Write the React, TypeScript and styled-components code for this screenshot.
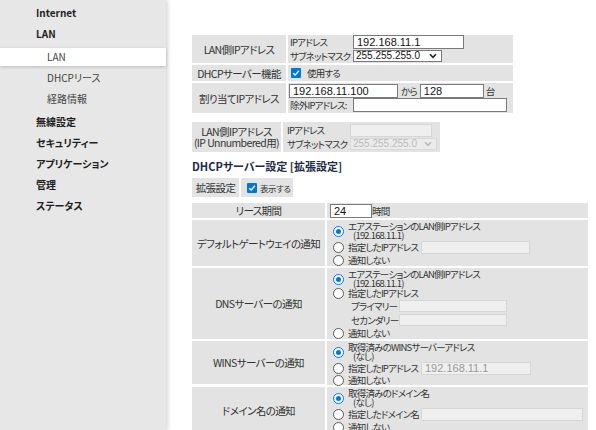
import React from 'react';
import styled, { createGlobalStyle, css } from 'styled-components';

const GlobalStyle = createGlobalStyle`
  html, body { margin: 0; padding: 0; background: #fff; }
  body {
    font-family: "Noto Sans CJK JP", "Noto Sans", sans-serif;
    font-size: 11px;
    color: #333;
    font-feature-settings: "palt";
  }
  * { box-sizing: border-box; }
`;

const Page = styled.div`
  display: flex;
  width: 596px;
  height: 430px;
  overflow: hidden;
`;

/* ---------- side menu ---------- */

const Sidebar = styled.nav`
  width: 166px;
  flex-shrink: 0;
  background: #e7e7e7;
  box-shadow: 2px 0 4px rgba(0, 0, 0, 0.16);
  padding-top: 2px;
  position: relative;
  z-index: 1;
`;

const MenuItem = styled.div`
  height: 21px;
  line-height: 21px;
  padding-left: 36px;
  font-weight: bold;
  font-size: 10px;
  color: #1e1e1e;
`;

const SubMenu = styled.div`
  padding-top: 1px;
`;

const SubItem = styled.div<{ $active?: boolean }>`
  height: 18px;
  line-height: 18px;
  margin: 3px 0;
  padding-left: 47px;
  font-size: 10px;
  color: #444;
  ${(p) =>
    p.$active &&
    css`
      background: #fff;
      box-shadow: 0 1px 3px rgba(0, 0, 0, 0.2);
    `}
`;

/* ---------- main ---------- */

const Main = styled.main`
  flex: 1;
  padding: 35px 0 0 26px;
  display: flex;
  flex-direction: column;
  align-items: flex-start;
`;

const FormGrid = styled.div<{ $cols: string; $mt?: number }>`
  display: grid;
  grid-template-columns: ${(p) => p.$cols};
  gap: 2px;
  margin-top: ${(p) => p.$mt || 0}px;
`;

const LabelCell = styled.div<{ $h?: number }>`
  background: #e3e3e3;
  display: flex;
  align-items: center;
  justify-content: center;
  text-align: center;
  font-size: 10.5px;
  letter-spacing: -0.6px;
  line-height: 11px;
  white-space: nowrap;
  color: #333;
  height: ${(p) => (p.$h ? `${p.$h}px` : 'auto')};
`;

const ValueCell = styled.div<{ $pl?: number }>`
  background: #e3e3e3;
  padding-left: ${(p) => p.$pl ?? 1}px;
  display: flex;
  flex-direction: column;
  justify-content: center;
  font-size: 9.5px;
  letter-spacing: -0.8px;
`;

const FieldLine = styled.div<{ $label?: number; $h?: number }>`
  display: grid;
  grid-template-columns: ${(p) => (p.$label ? `${p.$label}px auto` : 'auto')};
  align-items: center;
  height: ${(p) => p.$h || 14}px;
  justify-content: start;
`;

const InlineLine = styled.div<{ $h?: number }>`
  display: flex;
  align-items: center;
  height: ${(p) => p.$h || 14}px;
`;

const SmallText = styled.span<{ $pad?: number }>`
  color: #333;
  padding: 0 ${(p) => p.$pad ?? 0}px;
  white-space: nowrap;
`;

const TextInput = styled.input<{ $w: number; $h?: number }>`
  width: ${(p) => p.$w}px;
  height: ${(p) => p.$h || 14}px;
  border: 1px solid #7a7a7a;
  background: #fff;
  font-family: "Liberation Sans", Arial, sans-serif;
  font-size: 11px;
  letter-spacing: 0;
  color: #111;
  padding: 0 3px;
  margin: 0;
  outline: none;
  flex-shrink: 0;
  &:disabled {
    background: #efefef;
    border-color: #d6d6d6;
    color: #999;
  }
`;

const SelectWrap = styled.div<{ $w: number }>`
  position: relative;
  width: ${(p) => p.$w}px;
  height: 12px;
`;

const Select = styled.select`
  appearance: none;
  width: 100%;
  height: 12px;
  border: 1px solid #7a7a7a;
  background: #fff;
  font-family: "Liberation Sans", Arial, sans-serif;
  font-size: 10px;
  line-height: 10px;
  letter-spacing: 0;
  color: #111;
  padding: 0 0 0 2px;
  margin: 0;
  display: block;
  &:disabled {
    background: #efefef;
    border-color: #d6d6d6;
    color: #aaa;
  }
`;

const Chevron = styled.svg<{ $disabled?: boolean }>`
  position: absolute;
  right: 5px;
  top: 3px;
  width: 8px;
  height: 6px;
  color: ${(p) => (p.$disabled ? '#bbb' : '#222')};
  pointer-events: none;
`;

const CheckBox = styled.span<{ $gap?: number }>`
  display: inline-flex;
  align-items: center;
  justify-content: center;
  width: 10px;
  height: 10px;
  background: #0078d7;
  border-radius: 1px;
  flex-shrink: 0;
  margin-right: ${(p) => p.$gap ?? 5}px;
`;

const CheckLine = styled.label<{ $pl?: number; $pr?: number; $size?: number }>`
  display: flex;
  align-items: center;
  padding: 0 ${(p) => p.$pr ?? 0}px 0 ${(p) => p.$pl ?? 4}px;
  height: 100%;
  font-size: ${(p) => p.$size ?? 9.5}px;
  letter-spacing: ${(p) => (p.$size ? '-0.4px' : '-0.8px')};
`;

const Heading = styled.h2`
  margin: 7px 0 0;
  font-size: 11px;
  line-height: 14px;
  font-weight: bold;
  color: #1c2b47;
`;

/* ---------- radio groups ---------- */

const Radio = styled.span<{ $checked?: boolean }>`
  width: 11px;
  height: 11px;
  border-radius: 50%;
  flex-shrink: 0;
  border: 1px solid ${(p) => (p.$checked ? '#0078d7' : '#5a5a5a')};
  background: #fff;
  display: inline-flex;
  align-items: center;
  justify-content: center;
  margin-right: 4px;
  &::after {
    content: '';
    width: 5px;
    height: 5px;
    border-radius: 50%;
    background: ${(p) => (p.$checked ? '#0078d7' : 'transparent')};
  }
`;

const OptionList = styled.div`
  display: flex;
  flex-direction: column;
  padding: 2px 0 0 5px;
`;

const Option = styled.label<{ $h: number }>`
  display: flex;
  align-items: center;
  height: ${(p) => p.$h}px;
  color: #333;
`;

const OptionText = styled.span<{ $w?: number }>`
  line-height: 9px;
  white-space: nowrap;
  width: ${(p) => (p.$w ? `${p.$w}px` : 'auto')};
  flex-shrink: 0;
`;

const SubText = styled.span`
  display: block;
  padding-left: 5px;
`;

const SubField = styled.div<{ $h: number }>`
  display: grid;
  grid-template-columns: 48px auto;
  align-items: center;
  height: ${(p) => p.$h}px;
  padding-left: 18px;
`;

/* ---------- pieces ---------- */

const ChevronIcon = ({ disabled }: { disabled?: boolean }) => (
  <Chevron $disabled={disabled} viewBox="0 0 8 6">
    <path d="M1 1.2 L4 4.4 L7 1.2" fill="none" stroke="currentColor" strokeWidth="1.6" />
  </Chevron>
);

const MaskSelect = ({ w, disabled }: { w: number; disabled?: boolean }) => (
  <SelectWrap $w={w}>
    <Select disabled={disabled} defaultValue="255.255.255.0">
      <option>255.255.255.0</option>
    </Select>
    <ChevronIcon disabled={disabled} />
  </SelectWrap>
);

interface CheckedProps {
  label: string;
  pl?: number;
  pr?: number;
  gap?: number;
  size?: number;
}

const Checked = ({ label, pl, pr, gap, size }: CheckedProps) => (
  <CheckLine $pl={pl} $pr={pr} $size={size}>
    <CheckBox $gap={gap}>
      <svg width="8" height="8" viewBox="0 0 8 8">
        <path d="M1.2 4.2 L3.2 6.1 L6.9 1.8" fill="none" stroke="#fff" strokeWidth="1.4" />
      </svg>
    </CheckBox>
    {label}
  </CheckLine>
);

const menu = ['無線設定', 'セキュリティー', 'アプリケーション', '管理', 'ステータス'];

export default function App() {
  return (
    <Page>
      <GlobalStyle />
      <Sidebar>
        <MenuItem>Internet</MenuItem>
        <MenuItem>LAN</MenuItem>
        <SubMenu>
          <SubItem $active>LAN</SubItem>
          <SubItem>DHCPリース</SubItem>
          <SubItem>経路情報</SubItem>
        </SubMenu>
        {menu.map((m) => (
          <MenuItem key={m}>{m}</MenuItem>
        ))}
      </Sidebar>

      <Main>
        {/* LAN settings */}
        <FormGrid $cols="94px 225px">
          <LabelCell $h={28}>LAN側IPアドレス</LabelCell>
          <ValueCell $pl={2}>
            <FieldLine $label={63}>
              <SmallText>IPアドレス</SmallText>
              <TextInput $w={111} defaultValue="192.168.11.1" />
            </FieldLine>
            <FieldLine $label={63}>
              <SmallText>サブネットマスク</SmallText>
              <MaskSelect w={89} />
            </FieldLine>
          </ValueCell>

          <LabelCell $h={16}>DHCPサーバー機能</LabelCell>
          <ValueCell>
            <Checked label="使用する" pl={2} gap={6} />
          </ValueCell>

          <LabelCell $h={30}>割り当てIPアドレス</LabelCell>
          <ValueCell $pl={1}>
            <InlineLine>
              <TextInput $w={109} defaultValue="192.168.11.100" />
              <SmallText $pad={3}>から</SmallText>
              <TextInput $w={64} defaultValue="128" />
              <SmallText $pad={2}>台</SmallText>
            </InlineLine>
            <FieldLine $label={64}>
              <SmallText style={{ paddingLeft: 1 }}>除外IPアドレス:</SmallText>
              <TextInput $w={154} defaultValue="" />
            </FieldLine>
          </ValueCell>
        </FormGrid>

        {/* IP Unnumbered */}
        <FormGrid $cols="89px 157px" $mt={9}>
          <LabelCell $h={30}>
            LAN側IPアドレス
            <br />
            (IP Unnumbered用)
          </LabelCell>
          <ValueCell $pl={4}>
            <FieldLine $label={63}>
              <SmallText>IPアドレス</SmallText>
              <TextInput $w={82} $h={13} disabled defaultValue="" />
            </FieldLine>
            <FieldLine $label={63}>
              <SmallText>サブネットマスク</SmallText>
              <MaskSelect w={87} disabled />
            </FieldLine>
          </ValueCell>
        </FormGrid>

        <Heading>DHCPサーバー設定 [拡張設定]</Heading>

        <FormGrid $cols="47px auto" $mt={5}>
          <LabelCell $h={19}>拡張設定</LabelCell>
          <ValueCell>
            <Checked label="表示する" pl={5} pr={2} gap={3} size={8.5} />
          </ValueCell>
        </FormGrid>

        {/* extended settings */}
        <FormGrid $cols="133px 261px" $mt={6}>
          <LabelCell $h={15}>リース期間</LabelCell>
          <ValueCell $pl={3}>
            <InlineLine $h={15}>
              <TextInput $w={42} defaultValue="24" />
              <SmallText>時間</SmallText>
            </InlineLine>
          </ValueCell>

          <LabelCell $h={46}>デフォルトゲートウェイの通知</LabelCell>
          <ValueCell>
            <OptionList>
              <Option $h={18}>
                <Radio $checked />
                <OptionText>
                  エアステーションのLAN側IPアドレス
                  <SubText>(192.168.11.1)</SubText>
                </OptionText>
              </Option>
              <Option $h={15}>
                <Radio />
                <OptionText $w={73}>指定したIPアドレス</OptionText>
                <TextInput $w={109} $h={13} disabled />
              </Option>
              <Option $h={11}>
                <Radio />
                <OptionText>通知しない</OptionText>
              </Option>
            </OptionList>
          </ValueCell>

          <LabelCell $h={71}>DNSサーバーの通知</LabelCell>
          <ValueCell>
            <OptionList>
              <Option $h={18}>
                <Radio $checked />
                <OptionText>
                  エアステーションのLAN側IPアドレス
                  <SubText>(192.168.11.1)</SubText>
                </OptionText>
              </Option>
              <Option $h={11}>
                <Radio />
                <OptionText>指定したIPアドレス</OptionText>
              </Option>
              <SubField $h={14}>
                <span>プライマリー</span>
                <TextInput $w={108} $h={12} disabled />
              </SubField>
              <SubField $h={14}>
                <span>セカンダリー</span>
                <TextInput $w={108} $h={12} disabled />
              </SubField>
              <Option $h={12}>
                <Radio />
                <OptionText>通知しない</OptionText>
              </Option>
            </OptionList>
          </ValueCell>

          <LabelCell $h={43}>WINSサーバーの通知</LabelCell>
          <ValueCell>
            <OptionList>
              <Option $h={18}>
                <Radio $checked />
                <OptionText>
                  取得済みのWINSサーバーアドレス
                  <SubText>(なし)</SubText>
                </OptionText>
              </Option>
              <Option $h={14}>
                <Radio />
                <OptionText $w={73}>指定したIPアドレス</OptionText>
                <TextInput $w={110} $h={13} disabled defaultValue="192.168.11.1" />
              </Option>
              <Option $h={10}>
                <Radio />
                <OptionText>通知しない</OptionText>
              </Option>
            </OptionList>
          </ValueCell>

          <LabelCell $h={46}>ドメイン名の通知</LabelCell>
          <ValueCell>
            <OptionList>
              <Option $h={18}>
                <Radio $checked />
                <OptionText>
                  取得済みのドメイン名
                  <SubText>(なし)</SubText>
                </OptionText>
              </Option>
              <Option $h={14}>
                <Radio />
                <OptionText $w={73}>指定したドメイン名</OptionText>
                <TextInput $w={162} $h={13} disabled />
              </Option>
              <Option $h={12}>
                <Radio />
                <OptionText>通知しない</OptionText>
              </Option>
            </OptionList>
          </ValueCell>
        </FormGrid>
      </Main>
    </Page>
  );
}
